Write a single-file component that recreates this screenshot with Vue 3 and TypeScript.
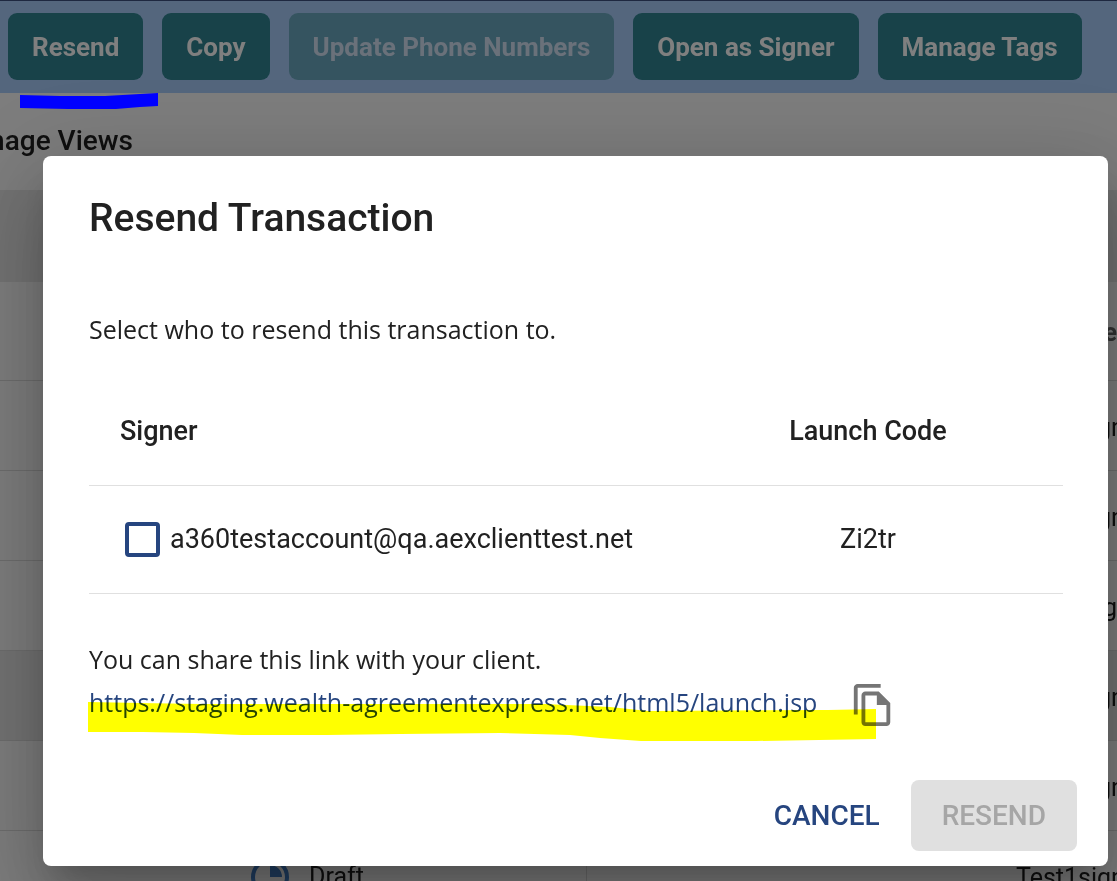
<script setup lang="ts">
import { ref } from 'vue'

interface ToolbarAction {
  label: string
  disabled?: boolean
}

interface Row {
  status?: string
  name: string
  kind?: 'heading' | 'shaded' | 'short'
}

const actions: ToolbarAction[] = [
  { label: 'Resend' },
  { label: 'Copy' },
  { label: 'Update Phone Numbers', disabled: true },
  { label: 'Open as Signer' },
  { label: 'Manage Tags' },
]

const rows: Row[] = [
  { name: 'e', kind: 'heading' },
  { name: 'Test1sign' },
  { name: 'Test1sign' },
  { name: 'g', kind: 'short' },
  { name: 'Test1sign', kind: 'shaded' },
  { name: 'Test1sign' },
  { name: 'Test1sign', status: 'Draft' },
]

const selected = ref(false)
const link = 'https://staging.wealth-agreementexpress.net/html5/launch.jsp'
</script>

<template>
  <div class="screen">
    <div class="page">
      <header class="toolbar">
        <button v-for="a in actions" :key="a.label" type="button" class="action" :disabled="a.disabled">
          {{ a.label }}
        </button>
      </header>
      <div class="views"><span>Manage Views</span></div>
      <div class="band"></div>
      <div class="rows">
        <div v-for="(row, i) in rows" :key="i" class="row" :class="row.kind">
          <div class="status">
            <template v-if="row.status">
              <svg class="pie" viewBox="0 0 40 40" aria-hidden="true">
                <circle cx="20" cy="20" r="17" fill="none" stroke="currentColor" stroke-width="4" />
                <path d="M20 20V8a12 12 0 0 1 12 12z" fill="currentColor" />
              </svg>
              <span>{{ row.status }}</span>
            </template>
          </div>
          <div class="name">{{ row.name }}</div>
        </div>
      </div>
    </div>

    <div class="backdrop">
      <section class="dialog" role="dialog" aria-labelledby="dialog-title">
        <h2 id="dialog-title">Resend Transaction</h2>
        <p class="intro">Select who to resend this transaction to.</p>
        <table>
          <thead>
            <tr>
              <th scope="col">Signer</th>
              <th scope="col" class="code">Launch Code</th>
            </tr>
          </thead>
          <tbody>
            <tr>
              <td>
                <label class="signer">
                  <input v-model="selected" type="checkbox" />
                  <span>a360testaccount@qa.aexclienttest.net</span>
                </label>
              </td>
              <td class="code">Zi2tr</td>
            </tr>
          </tbody>
        </table>
        <div class="share">
          <p>You can share this link with your client.</p>
          <div class="link-line">
            <a :href="link">{{ link }}</a>
            <button type="button" class="copy" aria-label="Copy link">
              <svg viewBox="0 0 24 24" aria-hidden="true">
                <path d="M16 1H4c-1.100 0-2 .9-2 2v14h2V3h12z" />
                <path
                  fill-rule="evenodd"
                  d="M15 5l6 6v10c0 1.100-.9 2-2 2H8c-1.100 0-2-.9-2-2V7c0-1.100.9-2 2-2zM8 7v14h11v-9h-5V7z"
                />
              </svg>
            </button>
            <svg class="highlight" viewBox="0 0 788 40" aria-hidden="true">
              <path
                d="M0 1L52 2L112 3H457L522 6L560 10L740 9L788 8V38L668 40H553L512 37L482 34L412 32L312 33L239 34H154L106 32L55 31H0Z"
              />
            </svg>
          </div>
        </div>
        <footer>
          <button type="button" class="cancel">CANCEL</button>
          <button type="button" class="resend" disabled>RESEND</button>
        </footer>
      </section>
      <svg class="underline" viewBox="0 0 138 16" aria-hidden="true">
        <path d="M0 2L40 3H85L120 1L138 0V13L120 14L96 16H48L0 15Z" />
      </svg>
    </div>
  </div>
</template>

<style>
body {
  margin: 0;
}
</style>

<style scoped>
* {
  box-sizing: border-box;
}

.screen {
  position: relative;
  height: 100vh;
  overflow: hidden;
  font-family: Roboto, 'Liberation Sans', sans-serif;
  font-size: 27px;
  line-height: 40px;
  color: #212121;
}

button {
  border: 0;
  font: inherit;
}

.page {
  background: #fafafa;
}

.toolbar {
  display: flex;
  gap: 19px;
  height: 93px;
  padding: 12px 8px 13px;
  border-top: 1px solid #3c5080;
  background: #a9cdfa;
}

.action {
  padding: 0 24px;
  border-radius: 9px;
  background: #308492;
  color: #fff;
  font-size: 26px;
  font-weight: 700;
  line-height: 38px;
  white-space: nowrap;
}

.action:disabled {
  background: #6aa9c0;
  color: #d4e2f4;
}

.views {
  display: flex;
  justify-content: flex-end;
  align-items: center;
  width: 133px;
  height: 97px;
  padding-bottom: 2px;
  white-space: nowrap;
  font-size: 28px;
  font-weight: 500;
}

.band {
  height: 92px;
  background: #e6e6e6;
}

.row {
  display: grid;
  grid-template-columns: 587px 1fr;
  height: 90px;
  border-bottom: 1px solid #dadada;
  align-items: center;
  font-size: 25px;
}

.row.heading {
  height: 99px;
  font-weight: 700;
  color: #666;
}

.row.shaded {
  background: #e6e6e6;
}

.status {
  display: flex;
  align-items: center;
  gap: 19px;
  height: 100%;
  padding: 2px 0 0 250px;
  border-right: 1px solid #dadada;
}

.pie {
  width: 40px;
  height: 40px;
  color: #4281c8;
}

.name {
  padding: 4px 0 0 429px;
  white-space: nowrap;
}

.heading .name,
.short .name {
  padding-left: 0;
  text-align: right;
}

.backdrop {
  position: absolute;
  inset: 0;
  padding: 156px 9px 15px 43px;
  background: rgba(0, 0, 0, 0.5);
}

.dialog {
  display: flex;
  flex-direction: column;
  min-height: 100%;
  padding: 38px 31px 15px 46px;
  border-radius: 8px;
  background: #fff;
  box-shadow:
    0 21px 29px -13px rgba(0, 0, 0, 0.2),
    0 46px 73px 6px rgba(0, 0, 0, 0.14),
    0 17px 88px 15px rgba(0, 0, 0, 0.12);
}

h2 {
  margin: 0;
  font-size: 39px;
  font-weight: 500;
  line-height: 48px;
}

p {
  margin: 0;
}

.intro,
.share {
  font-family: 'Segoe UI', 'Open Sans', sans-serif;
  font-size: 25px;
}

.intro {
  margin-top: 67px;
}

table {
  width: calc(100% - 14px);
  margin-top: 28px;
  border-collapse: collapse;
  table-layout: fixed;
}

th,
td {
  height: 108px;
  padding: 0 31px;
  border-bottom: 1px solid #e0e0e0;
  text-align: left;
  font-weight: 400;
}

th {
  font-weight: 500;
}

.code {
  width: 390px;
  text-align: center;
}

.signer {
  display: flex;
  align-items: center;
  gap: 10px;
  padding-left: 5px;
}

.signer input {
  appearance: none;
  width: 35px;
  height: 35px;
  margin: 0;
  border: 4px solid #26457f;
  border-radius: 4px;
}

.signer input:checked {
  background: #26457f;
}

.share {
  margin-top: 45px;
}

.link-line {
  position: relative;
  display: flex;
  align-items: center;
  gap: 33px;
  height: 46px;
}

a {
  color: #26457f;
  text-decoration: none;
}

.copy {
  display: flex;
  padding: 6px 0 0;
  background: none;
}

.copy svg {
  width: 46px;
  height: 46px;
  fill: #757575;
}

.highlight {
  position: absolute;
  left: -1px;
  top: 22px;
  width: 788px;
  height: 40px;
  fill: #ff0;
  mix-blend-mode: multiply;
  pointer-events: none;
}

footer {
  display: flex;
  justify-content: flex-end;
  gap: 16px;
  margin-top: auto;
}

footer button {
  height: 71px;
  border-radius: 8px;
  font-size: 28px;
  font-weight: 500;
}

.cancel {
  padding: 0 15px;
  background: none;
  color: #26457f;
}

.resend {
  padding: 0 31px;
  background: #e0e0e0;
  color: #a6a6a6;
}

.underline {
  position: absolute;
  left: 20px;
  top: 93px;
  width: 138px;
  height: 16px;
  fill: #00f;
}
</style>
